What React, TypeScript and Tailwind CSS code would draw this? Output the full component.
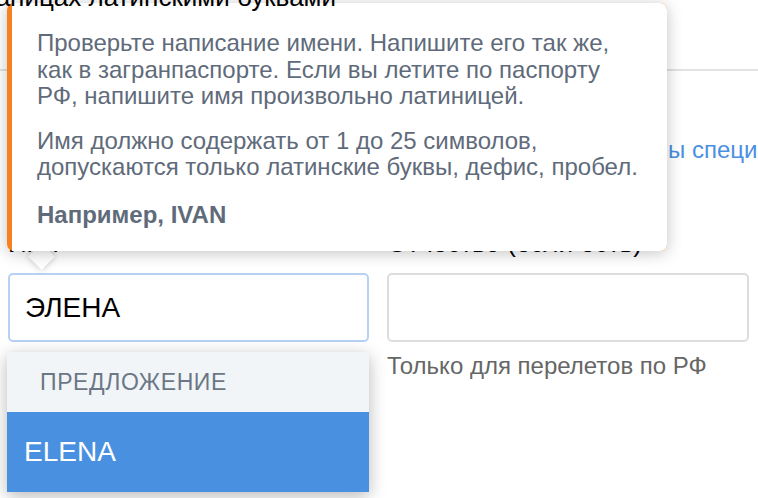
export default function App() {
  return (
    <div className="relative h-[498px] w-[758px] overflow-hidden bg-white font-['Liberation_Sans',Arial,sans-serif]">
      {/* page behind the hint */}
      <div className="box-content flex h-[69px] flex-col border-b-2 border-[#e2e2e2]">
        <div className="relative z-20 -mt-[18px] flex w-[336px] justify-end overflow-hidden">
          <p className="shrink-0 whitespace-nowrap text-[26px] leading-[30px] text-black">
            Пишите имя и фамилию в границах латинскими буквами
          </p>
        </div>
      </div>

      <div className="mt-[65px] flex whitespace-nowrap text-[24px] leading-[28px] text-[#4a90e2]">
        <div className="flex w-[668px] shrink-0 justify-end overflow-hidden">
          <span className="shrink-0">Что делать, если в имени есть символ</span>
        </div>
        <span>ы специальные</span>
      </div>

      <div className="mt-[64px] grid grid-cols-[361px_362px] gap-[18px] px-[8px] text-[26px] leading-[30px] text-black">
        <p>Имя</p>
        <p className="whitespace-nowrap">Отчество (если есть)</p>
      </div>

      <div className="mt-[15px] grid grid-cols-[361px_362px] gap-[18px] px-[8px]">
        <div className="relative">
          <div className="flex h-[69px] items-center rounded-[5px] border-2 border-[#b5d2f3] px-[15px] text-[28px] text-black">
            ЭЛЕНА
          </div>
          <div className="absolute left-[-1px] top-[79px] z-10 w-[362px] shadow-[0_4px_16px_rgba(0,0,0,0.28)]">
            <div className="flex h-[60px] items-center bg-[#f2f5f8] pl-[33px] text-[23px] tracking-[0.6px] text-[#6b7785]">
              ПРЕДЛОЖЕНИЕ
            </div>
            <div className="flex h-[80px] items-center bg-[#4a90e0] pl-[17px] text-[28px] text-white">
              ELENA
            </div>
          </div>
        </div>
        <div>
          <div className="h-[69px] rounded-[5px] border-2 border-[#dddddd]" />
          <p className="mt-[10px] whitespace-nowrap text-[24px] leading-[28px] text-[#666666]">
            Только для перелетов по РФ
          </p>
        </div>
      </div>

      {/* hint tooltip */}
      <div className="absolute left-[7px] top-[3px] z-10 w-[660px]">
        <div className="absolute left-[25px] top-[244px] h-[19px] w-[19px] rotate-45 bg-white shadow-[0_0_6px_rgba(0,0,0,0.25)]" />
        <div className="relative rounded-[7px] bg-[#f5821f] pl-[5px] shadow-[0_2px_16px_rgba(0,0,0,0.24)]">
          <div className="rounded-r-[7px] bg-white pb-[23px] pl-[25px] pr-[20px] pt-[27px] text-[24px] leading-[26.5px] text-[#5f6b7a]">
            <p className="whitespace-nowrap">
              Проверьте написание имени. Напишите его так же,
              <br />
              как в загранпаспорте. Если вы летите по паспорту
              <br />
              РФ, напишите имя произвольно латиницей.
            </p>
            <p className="mt-[18px] whitespace-nowrap">
              Имя должно содержать от 1 до 25 символов,
              <br />
              допускаются только латинские буквы, дефис, пробел.
            </p>
            <p className="mt-[21px] font-bold">Например, IVAN</p>
          </div>
        </div>
      </div>
    </div>
  );
}
